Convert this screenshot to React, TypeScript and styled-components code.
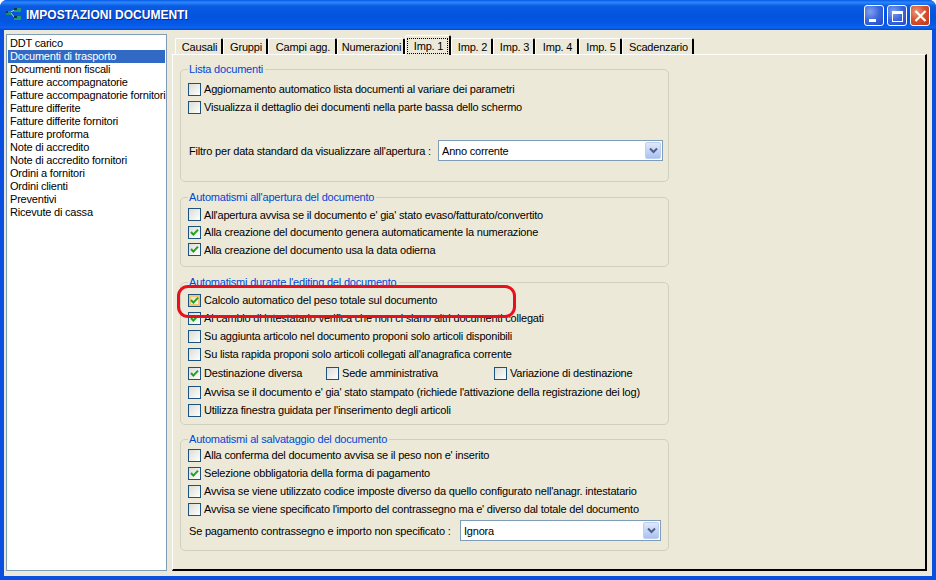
import React from 'react';
import styled, { createGlobalStyle } from 'styled-components';

const documents = [
    'DDT carico', 'Documenti di trasporto', 'Documenti non fiscali', 'Fatture accompagnatorie',
    'Fatture accompagnatorie fornitori', 'Fatture differite', 'Fatture differite fornitori', 'Fatture proforma',
    'Note di accredito', 'Note di accredito fornitori', 'Ordini a fornitori', 'Ordini clienti', 'Preventivi', 'Ricevute di cassa',
];

const tabs = [
    { label: 'Causali', width: 48 },
    { label: 'Gruppi', width: 45 },
    { label: 'Campi agg.', width: 69 },
    { label: 'Numerazioni', width: 68 },
    { label: 'Imp. 1', width: 46, active: true },
    { label: 'Imp. 2', width: 42 },
    { label: 'Imp. 3', width: 42 },
    { label: 'Imp. 4', width: 44 },
    { label: 'Imp. 5', width: 43 },
    { label: 'Scadenzario', width: 72 },
];

const Check = ({ label, checked, hot, width }: { label: string; checked?: boolean; hot?: boolean; width?: number }): JSX.Element => (
    <SCheckLabel $width={width}>
        <SBox $hot={hot}>
            {checked && (
                <svg width="9" height="9" viewBox="0 0 9 9">
                    <path d="M1 4 L3.4 6.6 L8 1.6" fill="none" stroke="#21a121" strokeWidth="2" />
                </svg>
            )}
        </SBox>
        {label}
    </SCheckLabel>
);

const Combo = ({ value, width }: { value: string; width: number }): JSX.Element => (
    <SCombo $width={width}>
        <span>{value}</span>
        <SComboButton>
            <svg width="9" height="7" viewBox="0 0 9 7">
                <path d="M1 1.5 L4.5 5 L8 1.5" fill="none" stroke="#4d6185" strokeWidth="2" />
            </svg>
        </SComboButton>
    </SCombo>
);

const App = (): JSX.Element => (
    <>
        <GlobalStyle />
        <SWindow>
            <STitleBar>
                <svg width="16" height="14" viewBox="0 0 16 14">
                    <path d="M4 4 L9 2 M4 4 L9 10" stroke="#c8d8e0" strokeWidth="1" fill="none" />
                    <rect x="0" y="3" width="5" height="4" fill="#1d8a7a" />
                    <rect x="0" y="3" width="2" height="2" fill="#16305a" />
                    <rect x="8" y="0" width="7" height="4" fill="#1f9a78" />
                    <rect x="8" y="0" width="3" height="2" fill="#16305a" />
                    <rect x="8" y="8" width="7" height="4" fill="#1f9a78" />
                    <rect x="8" y="8" width="3" height="2" fill="#16305a" />
                </svg>
                <STitle>IMPOSTAZIONI DOCUMENTI</STitle>
                <SCaptionButtons>
                    <SCaptionButton>
                        <svg width="20" height="21" viewBox="0 0 20 21">
                            <rect x="4" y="13" width="7" height="3" fill="#fff" />
                        </svg>
                    </SCaptionButton>
                    <SCaptionButton>
                        <svg width="20" height="21" viewBox="0 0 20 21">
                            <rect x="4.5" y="5.5" width="10" height="10" fill="none" stroke="#fff" />
                            <rect x="4" y="5" width="11" height="3" fill="#fff" />
                        </svg>
                    </SCaptionButton>
                    <SCaptionButton $close>
                        <svg width="20" height="21" viewBox="0 0 20 21">
                            <path d="M4.5 5 L14.5 15 M14.5 5 L4.5 15" stroke="#fff" strokeWidth="2.2" />
                        </svg>
                    </SCaptionButton>
                </SCaptionButtons>
            </STitleBar>
            <SClient>
                <SList>
                    {documents.map((name, i) => <SListItem key={name} $selected={i === 1}>{name}</SListItem>)}
                </SList>
                <STabArea>
                    <STabStrip>
                        {tabs.map((tab) => (
                            <STab key={tab.label} $active={tab.active} $width={tab.width}>
                                {tab.active ? <SFocus>{tab.label}</SFocus> : tab.label}
                            </STab>
                        ))}
                    </STabStrip>
                    <SPanel>
                        <SGroup $top={4}>
                            <SLegend>Lista documenti</SLegend>
                            <Check label="Aggiornamento automatico lista documenti al variare dei parametri" />
                            <Check label="Visualizza il dettaglio dei documenti nella parte bassa dello schermo" />
                            <SComboRow $top={24} $bottom={20}>
                                <SComboLabel $width={250}>Filtro per data standard da visualizzare all'apertura :</SComboLabel>
                                <Combo value="Anno corrente" width={225} />
                            </SComboRow>
                        </SGroup>
                        <SGroup $top={2} $tight>
                            <SLegend>Automatismi all'apertura del documento</SLegend>
                            <Check label="All'apertura avvisa se il documento e' gia' stato evaso/fatturato/convertito" />
                            <Check label="Alla creazione del documento genera automaticamente la numerazione" checked />
                            <Check label="Alla creazione del documento usa la data odierna" checked />
                            <SGroupEnd $height={7.5} />
                        </SGroup>
                        <SGroup $top={2} $after={8}>
                            <SLegend>Automatismi durante l'editing del documento</SLegend>
                            <Check label="Calcolo automatico del peso totale sul documento" checked hot />
                            <Check label="Al cambio di intestatario verifica che non ci siano altri documenti collegati" checked />
                            <Check label="Su aggiunta articolo nel documento proponi solo articoli disponibili" />
                            <Check label="Su lista rapida proponi solo articoli collegati all'anagrafica corrente" />
                            <SCheckRow>
                                <Check label="Destinazione diversa" checked width={138} />
                                <Check label="Sede amministrativa" width={168} />
                                <Check label="Variazione di destinazione" />
                            </SCheckRow>
                            <Check label="Avvisa se il documento e' gia' stato stampato (richiede l'attivazione della registrazione dei log)" />
                            <Check label="Utilizza finestra guidata per l'inserimento degli articoli" />
                            <SGroupEnd $height={5} />
                        </SGroup>
                        <SGroup $top={0}>
                            <SLegend>Automatismi al salvataggio del documento</SLegend>
                            <Check label="Alla conferma del documento avvisa se il peso non e' inserito" />
                            <Check label="Selezione obbligatoria della forma di pagamento" checked />
                            <Check label="Avvisa se viene utilizzato codice imposte diverso da quello configurato nell'anagr. intestatario" />
                            <Check label="Avvisa se viene specificato l'importo del contrassegno ma e' diverso dal totale del documento" />
                            <SComboRow $top={2} $bottom={9}>
                                <SComboLabel $width={272}>Se pagamento contrassegno e importo non specificato :</SComboLabel>
                                <Combo value="Ignora" width={201} />
                            </SComboRow>
                        </SGroup>
                    </SPanel>
                </STabArea>
            </SClient>
            <SMarker />
        </SWindow>
    </>
);

const GlobalStyle = createGlobalStyle`
    html, body {
        margin: 0;
        padding: 0;
        background: #fff;
    }
    * {
        box-sizing: border-box;
    }
`;

const SWindow = styled.div`
    position: relative;
    display: flex;
    flex-direction: column;
    width: 936px;
    height: 580px;
    overflow: hidden;
    border-radius: 7px 7px 0 0;
    font-family: "Liberation Sans", Arial, sans-serif;
    font-size: 11px;
    letter-spacing: -0.2px;
    color: #000;
    background: #0a50e0;
`;

const STitleBar = styled.div`
    display: flex;
    align-items: center;
    flex: none;
    height: 30px;
    padding: 0 6px 0 6px;
    background: linear-gradient(180deg, #0a5be8 0%, #2a86f8 8%, #0a5ce4 20%, #0353dd 55%, #0458e6 80%, #0a62f0 92%, #0648c8 100%);
`;

const STitle = styled.span`
    margin-left: 4px;
    font-size: 12px;
    font-weight: bold;
    letter-spacing: 0;
    color: #fff;
    text-shadow: 1px 1px 0 #0a2a90;
`;

const SCaptionButtons = styled.div`
    display: flex;
    gap: 3px;
    margin-left: auto;
`;

const SCaptionButton = styled.div<{ $close?: boolean }>`
    width: 20px;
    height: 21px;
    border: 1px solid #fff;
    border-radius: 3px;
    overflow: hidden;
    background: ${(props) => props.$close
        ? 'radial-gradient(circle at 30% 30%, #e89a80 0%, #d9532f 45%, #c0360f 100%)'
        : 'radial-gradient(circle at 30% 30%, #7f9ff0 0%, #3a66db 50%, #2448c4 100%)'};
    svg {
        display: block;
    }
`;

const SClient = styled.div`
    display: flex;
    flex: 1;
    gap: 5px;
    margin: 0 4px 4px;
    padding: 4px 5px 5px 2px;
    min-height: 0;
    background: #ece9d8;
`;

const SList = styled.div`
    flex: none;
    width: 161px;
    padding: 2px 1px;
    border: 1px solid #7f9db9;
    background: #fff;
    overflow: hidden;
`;

const SListItem = styled.div<{ $selected?: boolean }>`
    height: 13px;
    padding-left: 2px;
    line-height: 13px;
    white-space: nowrap;
    background: ${(props) => props.$selected ? '#316ac5' : 'transparent'};
    color: ${(props) => props.$selected ? '#fff' : '#000'};
`;

const STabArea = styled.div`
    display: flex;
    flex: 1;
    flex-direction: column;
    min-width: 0;
`;

const STabStrip = styled.div`
    display: flex;
    align-items: flex-end;
    flex: none;
    height: 20px;
    padding-left: 3px;
    position: relative;
    z-index: 1;
`;

const STab = styled.div<{ $active?: boolean; $width: number }>`
    display: flex;
    align-items: center;
    justify-content: center;
    width: ${(props) => props.$width}px;
    height: ${(props) => props.$active ? 20 : 16}px;
    margin-bottom: ${(props) => props.$active ? -1 : 0}px;
    padding-left: ${(props) => props.$active ? 0 : 2}px;
    border-top: 1px solid #fff;
    border-left: 1px solid #fff;
    border-right: 2px solid #000;
    border-radius: 2px 2px 0 0;
    background: #ece9d8;
    white-space: nowrap;
`;

const SFocus = styled.span`
    display: flex;
    align-items: center;
    justify-content: center;
    width: 41px;
    height: 16px;
    padding-left: 2px;
    outline: 1px dotted #000;
    outline-offset: -1px;
`;

const SPanel = styled.div`
    flex: 1;
    min-height: 0;
    padding: 8px 0 0 7px;
    border-top: 1px solid #fff;
    border-left: 1px solid #fff;
    border-right: 2px solid #000;
    border-bottom: 2px solid #000;
    background: #ece9d8;
`;

const SCheckLabel = styled.div<{ $width?: number }>`
    display: flex;
    align-items: center;
    flex: none;
    gap: 3px;
    height: 18px;
    width: ${(props) => props.$width ? `${props.$width}px` : 'auto'};
    white-space: nowrap;
`;

const SGroup = styled.fieldset<{ $top: number; $after?: number; $tight?: boolean }>`
    display: block;
    width: 489px;
    min-width: 0;
    margin: 0 0 ${(props) => props.$after ?? 9}px;
    padding: ${(props) => props.$top}px 0 0 7px;
    border: 1px solid #d0d0bf;
    border-radius: 5px;
    ${SCheckLabel} {
        height: ${(props) => props.$tight ? 17.5 : 18}px;
    }
`;

const SLegend = styled.legend`
    padding: 0 2px 0 1px;
    margin-left: 0;
    line-height: 13px;
    color: #0046d5;
`;

const SBox = styled.div<{ $hot?: boolean }>`
    display: flex;
    align-items: center;
    justify-content: center;
    flex: none;
    width: 13px;
    height: 13px;
    border: 1px solid #1c5180;
    background: linear-gradient(135deg, #dcdcd7 0%, #f4f4f0 70%, #fff 100%);
    box-shadow: ${(props) => props.$hot ? 'inset 0 0 0 2px #f8c66a' : 'none'};
`;

const SCheckRow = styled.div`
    display: flex;
    margin-top: 1px;
    margin-bottom: 1px;
`;

const SGroupEnd = styled.div<{ $height: number }>`
    height: ${(props) => props.$height}px;
`;

const SComboRow = styled.div<{ $top: number; $bottom: number }>`
    display: flex;
    align-items: center;
    margin-top: ${(props) => props.$top}px;
    margin-bottom: ${(props) => props.$bottom}px;
`;

const SComboLabel = styled.span<{ $width: number }>`
    width: ${(props) => props.$width}px;
    flex: none;
    padding-left: 1px;
    white-space: nowrap;
`;

const SCombo = styled.div<{ $width: number }>`
    display: flex;
    align-items: center;
    justify-content: space-between;
    flex: none;
    width: ${(props) => props.$width}px;
    height: 21px;
    padding: 1px 1px 1px 3px;
    border: 1px solid #7f9db9;
    background: #fff;
`;

const SComboButton = styled.div`
    display: flex;
    align-items: center;
    justify-content: center;
    width: 16px;
    height: 17px;
    border-radius: 2px;
    border: 1px solid #bcd0f0;
    background: linear-gradient(180deg, #dfe8fb 0%, #c0d2f8 60%, #aac0f0 100%);
`;

const SMarker = styled.div`
    position: absolute;
    left: 177px;
    top: 285px;
    width: 339px;
    height: 33px;
    border: 3px solid #e8101c;
    border-radius: 11px;
    pointer-events: none;
`;

export default App;
